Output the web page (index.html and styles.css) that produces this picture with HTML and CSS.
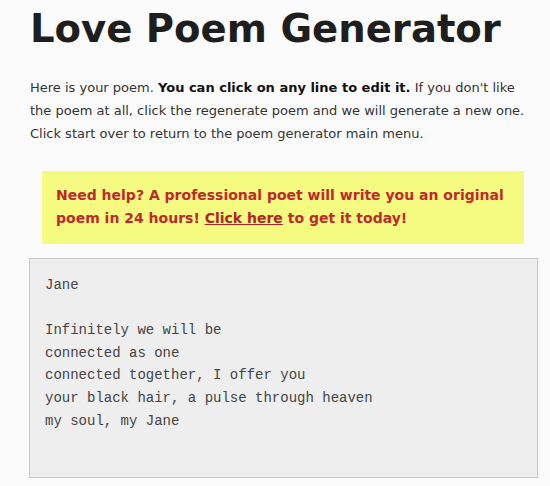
FILE: index.html
```html
<!DOCTYPE html>
<html>
<head>
<meta charset="utf-8">
<link rel="stylesheet" href="styles.css">
</head>
<body>
<main class="page">
  <h1 class="title">Love Poem Generator</h1>
  <p class="intro">Here is your poem. <strong>You can click on any line to edit it.</strong> If you don't like the poem at all, click the regenerate poem and we will generate a new one. Click start over to return to the poem generator main menu.</p>
  <div class="promo">Need help? A professional poet will write you an original poem in 24 hours! <a href="#" class="promo-link">Click here</a> to get it today!</div>
  <div class="poem">
    <div class="line">Jane</div>
    <div class="line">&nbsp;</div>
    <div class="line">Infinitely we will be</div>
    <div class="line">connected as one</div>
    <div class="line">connected together, I offer you</div>
    <div class="line">your black hair, a pulse through heaven</div>
    <div class="line">my soul, my Jane</div>
  </div>
</main>
</body>
</html>
```

FILE: styles.css
```css
html, body {
  margin: 0;
  padding: 0;
  background: #fbfbfb;
}
.page {
  padding: 9px 12px 0 30px;
  font-family: "DejaVu Sans", Verdana, sans-serif;
  color: #333;
}
.title {
  margin: 0;
  font-size: 38.6px;
  line-height: 40px;
  font-weight: bold;
  color: #1e1e1e;
}
.intro {
  margin: 27px 0 0 0;
  font-size: 13px;
  line-height: 23px;
  color: #333;
}
.intro strong {
  color: #111;
}
.promo {
  margin: 26px 14px 0 12px;
  padding: 13px 10px 14px 14px;
  background: #f5fa80;
  color: #c0292b;
  font-weight: bold;
  font-size: 14px;
  line-height: 23px;
}
.promo-link {
  color: #b02426;
  text-decoration: underline;
}
.poem {
  margin: 14px 0 0 -1px;
  height: 193px;
  padding: 15px 15px 10px 15px;
  background: #eeeeee;
  border: 1px solid #c8c8c8;
  font-family: "Liberation Mono", "Courier New", monospace;
  font-size: 14px;
  line-height: 22.6px;
  color: #444;
}
```
